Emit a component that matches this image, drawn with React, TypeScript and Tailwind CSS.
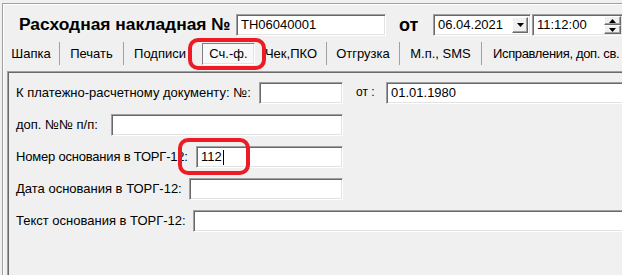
import React from "react";

const inputCls =
  "h-[22px] bg-white border border-t-[#a0a0a0] border-l-[#a0a0a0] border-r-white border-b-white shadow-[inset_1px_1px_0_#696969,inset_-1px_-1px_0_#e3e3e3] flex items-center pl-[4px] shrink-0 whitespace-nowrap overflow-hidden";

const btnCls =
  "bg-[#f0f0f0] border border-t-white border-l-white border-r-[#696969] border-b-[#696969] shadow-[inset_-1px_-1px_0_#a0a0a0] flex items-center justify-center";

function Sep() {
  return <div className="w-[1px] h-[23px] bg-[#a0a0a0] shrink-0" />;
}

function Tab({ w, children }: { w: string; children: React.ReactNode }) {
  return (
    <div className={`${w} h-[23px] flex items-center justify-center shrink-0 whitespace-nowrap`}>
      {children}
    </div>
  );
}

function Tri({ up }: { up?: boolean }) {
  return (
    <svg width="7" height="4" viewBox="0 0 7 4">
      {up ? <path d="M0 4 L3.5 0 L7 4 Z" fill="#000" /> : <path d="M0 0 L7 0 L3.5 4 Z" fill="#000" />}
    </svg>
  );
}

export default function App() {
  return (
    <div className="w-[622px] h-[275px] overflow-hidden bg-[#f0f0f0] relative pt-[3px] pl-[2px] text-black text-[13px] font-['Liberation_Sans',Arial,sans-serif]">
      <div className="h-[400px] w-[700px] border-t border-l border-[#a0a0a0] shadow-[inset_1px_1px_0_#ffffff]">
        {/* Header */}
        <div className="flex items-center h-[22px] mt-[10px]">
          <div className="w-[217px] ml-[16px] font-bold text-[17.4px] leading-none whitespace-nowrap">
            Расходная накладная №
          </div>
          <div className={`${inputCls} w-[150px]`}>ТН06040001</div>
          <div className="ml-[13px] w-[34px] font-bold text-[18px] leading-none">от</div>
          <div className={`${inputCls} w-[98px] justify-between pr-[2px]`}>
            <span>06.04.2021</span>
            <div className={`${btnCls} w-[16px] h-[16px]`}>
              <Tri />
            </div>
          </div>
          <div className={`${inputCls} w-[91px] ml-[1px] justify-between pr-[1px]`}>
            <span>11:12:00</span>
            <div className="flex flex-col">
              <div className={`${btnCls} w-[17px] h-[9px]`}>
                <Tri up />
              </div>
              <div className={`${btnCls} w-[17px] h-[9px]`}>
                <Tri />
              </div>
            </div>
          </div>
        </div>

        {/* Tabs */}
        <div className="flex h-[23px] mt-[6px] items-center">
          <Tab w="w-[56px]">Шапка</Tab>
          <Sep />
          <Tab w="w-[63px]">Печать</Tab>
          <Sep />
          <Tab w="w-[72px]">Подписи</Tab>
          <div className="w-[60px] h-[23px] shrink-0 flex items-center">
            <div className="ml-[6px] w-[53px] h-[22px] flex items-center justify-center bg-[#f8f8f8] border border-t-[#808080] border-l-[#808080] border-r-white border-b-white shadow-[inset_-1px_-1px_0_#e3e3e3]">
              Сч.-ф.
            </div>
          </div>
          <Tab w="w-[70px]">Чек,ПКО</Tab>
          <Sep />
          <Tab w="w-[72px]">Отгрузка</Tab>
          <Sep />
          <Tab w="w-[81px]">М.п., SMS</Tab>
          <Sep />
          <div className="pl-[11px] h-[23px] flex items-center whitespace-nowrap tracking-[-0.35px]">Исправления, доп. св.</div>
        </div>

        {/* Panel */}
        <div className="mt-[6px] ml-[4px] h-[300px] border-t border-l border-[#a0a0a0] shadow-[inset_1px_1px_0_#696969] pt-[10px] pl-[8px] flex flex-col gap-[10px]">
          <div className="flex items-center h-[22px]">
            <div className="w-[243px] shrink-0 whitespace-nowrap">К платежно-расчетному документу: №:</div>
            <div className={`${inputCls} w-[84px]`} />
            <div className="ml-[13px] w-[30px] shrink-0 text-[12px] mb-[2px] whitespace-nowrap">от :</div>
            <div className={`${inputCls} w-[300px]`}>01.01.1980</div>
          </div>
          <div className="flex items-center h-[22px]">
            <div className="w-[95px] shrink-0 whitespace-nowrap">доп. №№ п/п:</div>
            <div className={`${inputCls} w-[232px]`} />
          </div>
          <div className="flex items-center h-[22px]">
            <div className="w-[180px] shrink-0 whitespace-nowrap tracking-[-0.2px]">Номер основания в ТОРГ-12:</div>
            <div className={`${inputCls} w-[147px]`}>
              <span>112</span>
              <span className="inline-block w-[1px] h-[15px] bg-black ml-[1px]" />
            </div>
          </div>
          <div className="flex items-center h-[22px]">
            <div className="w-[173px] shrink-0 whitespace-nowrap">Дата основания в ТОРГ-12:</div>
            <div className={`${inputCls} w-[154px]`} />
          </div>
          <div className="flex items-center h-[22px]">
            <div className="w-[177px] shrink-0 whitespace-nowrap">Текст основания в ТОРГ-12:</div>
            <div className={`${inputCls} w-[460px]`} />
          </div>
        </div>
      </div>

      {/* Red annotation frames */}
      <div className="absolute left-[188px] top-[38px] w-[78px] h-[32px] border-[4px] border-[#ed1c24] rounded-[10px]" />
      <div className="absolute left-[178px] top-[138px] w-[72px] h-[37px] border-[4px] border-[#ed1c24] rounded-[10px]" />
    </div>
  );
}
